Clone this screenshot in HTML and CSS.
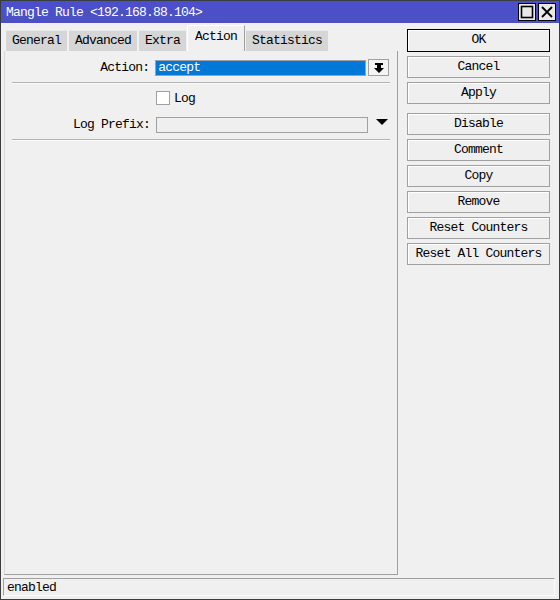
FILE: index.html
```html
<!DOCTYPE html>
<html>
<head>
<meta charset="utf-8">
<link rel="stylesheet" href="styles.css">
</head>
<body>
<div class="window">
  <div class="titlebar">
    <span class="title">Mangle Rule &lt;192.168.88.104&gt;</span>
    <div class="winbtns">
      <span class="wbtn"><svg width="14" height="14" viewBox="0 0 14 14"><rect x="1.5" y="1.5" width="11" height="11" fill="none" stroke="#000" stroke-width="1.6"/></svg></span>
      <span class="wbtn"><svg width="14" height="14" viewBox="0 0 14 14"><path d="M2 2L12 12M12 2L2 12" stroke="#000" stroke-width="1.8"/></svg></span>
    </div>
  </div>
  <div class="main">
    <div class="left">
      <div class="tabs">
        <span class="tab">General</span>
        <span class="tab">Advanced</span>
        <span class="tab">Extra</span>
        <span class="tab active">Action</span>
        <span class="tab">Statistics</span>
      </div>
      <div class="panel">
        <div class="row">
          <span class="label">Action:</span>
          <span class="field selected">accept</span>
          <span class="ddbtn"><svg width="12" height="12" viewBox="0 0 12 12"><rect x="2" y="1" width="8" height="2" fill="#000"/><path d="M4 3h4v3h3L6 11L1 6h3z" fill="#000"/></svg></span>
        </div>
        <div class="sep"></div>
        <div class="row checkrow">
          <span class="label"></span>
          <span class="check"></span>
          <span class="checklabel">Log</span>
        </div>
        <div class="row">
          <span class="label">Log Prefix:</span>
          <span class="field empty"></span>
          <span class="tri"><svg width="12" height="8" viewBox="0 0 12 8"><path d="M0 0H12L6 6z" fill="#000"/></svg></span>
        </div>
        <div class="sep"></div>
      </div>
    </div>
    <div class="buttons">
      <span class="btn default">OK</span>
      <span class="btn">Cancel</span>
      <span class="btn">Apply</span>
      <span class="btn gap">Disable</span>
      <span class="btn">Comment</span>
      <span class="btn">Copy</span>
      <span class="btn">Remove</span>
      <span class="btn">Reset Counters</span>
      <span class="btn">Reset All Counters</span>
    </div>
  </div>
  <div class="status">enabled</div>
</div>
</body>
</html>
```

FILE: styles.css
```css
html, body {
  margin: 0;
  padding: 0;
  background: #f0f0f0;
}
.window {
  width: 560px;
  height: 600px;
  box-sizing: border-box;
  border: 1px solid #3c3c3c;
  background: #f0f0f0;
  display: flex;
  flex-direction: column;
  font-family: "Liberation Mono", "DejaVu Sans Mono", monospace;
  font-size: 13px;
  letter-spacing: -0.8px;
  color: #000;
}
.titlebar {
  height: 22px;
  background: #4b4fc8;
  display: flex;
  align-items: center;
  justify-content: space-between;
  padding: 0 3px 0 5px;
}
.title {
  color: #fff;
  padding-top: 1px;
}
.winbtns {
  display: flex;
  gap: 2px;
}
.wbtn {
  width: 18px;
  height: 18px;
  box-sizing: border-box;
  border: 1px solid #000;
  background: #e8e8e8;
  display: flex;
  align-items: center;
  justify-content: center;
}
.main {
  flex: 1;
  display: flex;
  padding: 2px 0 0 3px;
}
.left {
  width: 394px;
  display: flex;
  flex-direction: column;
}
.tabs {
  display: flex;
  align-items: flex-end;
  height: 26px;
  padding-left: 2px;
  gap: 2px;
}
.tab {
  height: 21px;
  box-sizing: border-box;
  padding: 2px 6px 0;
  background: #d6d6d6;
  border-top: 1px solid #e8e8e8;
  line-height: 16px;
}
.tab.active {
  height: 26px;
  background: #f0f0f0;
  padding: 3px 7px 0;
  border-top: 1px solid #ffffff;
  border-left: 1px solid #ffffff;
  border-right: 1px solid #a0a0a0;
  margin: 0 -1px;
}
.panel {
  flex: 1;
  border-left: 1px solid #d8d8d8;
  border-right: 1px solid #a0a0a0;
  border-bottom: 1px solid #a0a0a0;
  padding: 8px 8px 0 7px;
}
.row {
  display: flex;
  align-items: center;
  height: 17px;
}
.label {
  width: 138px;
  text-align: right;
  padding-right: 6px;
  white-space: nowrap;
}
.field {
  width: 212px;
  height: 16px;
  box-sizing: border-box;
  border: 1px solid #a0a0a0;
  line-height: 14px;
  padding-left: 2px;
}
.field.selected {
  background: #0078d7;
  color: #fff;
  border-color: #a0a0a0;
}
.field.empty {
  background: #efefef;
}
.ddbtn {
  margin-left: 2px;
  width: 21px;
  height: 17px;
  box-sizing: border-box;
  border: 1px solid #a0a0a0;
  background: #f4f4f4;
  display: flex;
  align-items: center;
  justify-content: center;
}
.tri {
  margin-left: 8px;
  display: flex;
  align-items: center;
  height: 17px;
  padding-bottom: 4px;
}
.sep {
  height: 1px;
  background: #b4b4b4;
  border-bottom: 1px solid #fafafa;
  margin: 6px 0 6px;
  width: 378px;
}
.checkrow {
  margin-bottom: 10px;
  height: 16px;
}
.check {
  width: 14px;
  height: 14px;
  box-sizing: border-box;
  border: 1px solid #a0a0a0;
  background: #fff;
}
.checklabel {
  margin-left: 4px;
}
.buttons {
  margin-left: 9px;
  padding-top: 4px;
  display: flex;
  flex-direction: column;
  gap: 4px;
  width: 143px;
}
.btn {
  height: 22px;
  box-sizing: border-box;
  border: 1px solid #a0a0a0;
  background: #efefef;
  box-shadow: inset 1px 1px 0 #fff;
  text-align: center;
  line-height: 20px;
}
.btn.default {
  border: 1px solid #000;
  height: 23px;
}
.btn.gap {
  margin-top: 5px;
}
.status {
  margin: 3px 4px 3px 2px;
  height: 18px;
  box-sizing: border-box;
  border-top: 1px solid #a0a0a0;
  border-left: 1px solid #a0a0a0;
  border-right: 1px solid #fcfcfc;
  border-bottom: 1px solid #fcfcfc;
  padding-left: 3px;
  line-height: 17px;
}
```
